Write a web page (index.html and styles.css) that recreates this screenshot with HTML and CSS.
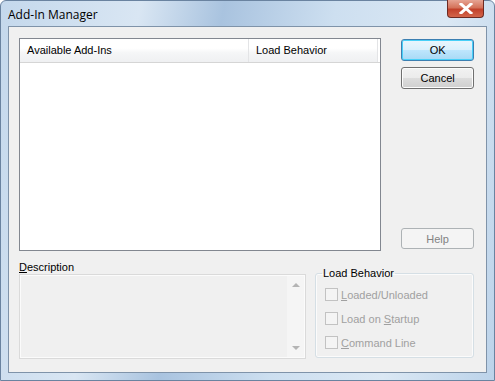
FILE: index.html
```html
<!DOCTYPE html>
<html lang="en">
<head>
    <meta charset="UTF-8">
    <title>Add-In Manager</title>
    <link rel="stylesheet" href="styles.css">
</head>
<body>

<div class="window">
    <div class="titlebar">
        <span class="title">Add-In Manager</span>
        <button class="close" type="button">
            <svg width="14" height="11" viewBox="0 0 14 11">
                <path d="M2 1 L12 10 M12 1 L2 10" stroke="#fff" stroke-width="3" stroke-linecap="square"/>
            </svg>
        </button>
    </div>
    <div class="client">
        <div class="top-row">
            <div class="listbox">
                <div class="list-header">
                    <div class="col col-name">Available Add-Ins</div>
                    <div class="col col-load">Load Behavior</div>
                    <div class="col-rest"></div>
                </div>
            </div>
            <div class="buttons">
                <button class="btn btn-default" type="button">OK</button>
                <button class="btn" type="button">Cancel</button>
                <button class="btn btn-disabled help" type="button">Help</button>
            </div>
        </div>
        <div class="bottom-row">
            <div class="description">
                <div class="desc-label"><u>D</u>escription</div>
                <div class="desc-box">
                    <div class="scrollbar">
                        <span class="arrow up"></span>
                        <span class="arrow down"></span>
                    </div>
                </div>
            </div>
            <fieldset class="group">
                <legend>Load Behavior</legend>
                <label class="check"><span class="box"></span><span><u>L</u>oaded/Unloaded</span></label>
                <label class="check"><span class="box"></span><span>Load on <u>S</u>tartup</span></label>
                <label class="check"><span class="box"></span><span><u>C</u>ommand Line</span></label>
            </fieldset>
        </div>
    </div>
</div>

</body>
</html>
```

FILE: styles.css
```css
* {
    box-sizing: border-box;
}
body {
    margin: 0;
    font-family: 'Liberation Sans', Arial, sans-serif;
    font-size: 11px;
    color: #000;
    background: #fff;
}
.window {
    width: 495px;
    height: 381px;
    padding: 0 7px 7px 7px;
    border: 1px solid #6a83a0;
    border-radius: 6px 6px 0 0;
    background: linear-gradient(100deg, #c4d8ec 0%, #d9e6f3 25%, #a9c3df 40%, #cddff0 60%, #dbe8f4 80%, #bcd3ea 100%);
    display: flex;
    flex-direction: column;
}
.titlebar {
    height: 26px;
    display: flex;
    align-items: flex-start;
    justify-content: space-between;
}
.title {
    font-family: 'Open Sans', 'Liberation Sans', sans-serif;
    font-size: 12px;
    margin-top: 5px;
    color: #000;
}
.close {
    width: 37px;
    height: 18px;
    margin-top: -1px;
    margin-right: 3px;
    padding: 0;
    border: 1px solid #6d2a22;
    border-top: none;
    border-radius: 0 0 4px 4px;
    background: linear-gradient(#e6a493 0%, #d4725a 45%, #c2412b 55%, #d3654a 100%);
    display: flex;
    align-items: center;
    justify-content: center;
}
.client {
    flex: 1;
    background: #f0f0f0;
    border: 1px solid #7f93a9;
    padding: 11px 12px 13px 10px;
    display: flex;
    flex-direction: column;
}
.top-row {
    display: flex;
    gap: 20px;
}
.listbox {
    width: 363px;
    height: 213px;
    border: 1px solid #828790;
    background: #fff;
}
.list-header {
    display: flex;
    height: 24px;
    background: linear-gradient(#ffffff 0%, #ffffff 40%, #f5f6f7 60%, #eff0f2 100%);
    border-bottom: 1px solid #d5d5d5;
}
.col {
    flex-shrink: 0;
    padding: 5px 0 0 7px;
    border-right: 1px solid #e3e4e6;
    white-space: nowrap;
}
.col-name {
    width: 229px;
}
.col-load {
    width: 129px;
}
.col-rest {
    flex: 1;
    background: #fff;
}
.buttons {
    width: 73px;
    display: flex;
    flex-direction: column;
    padding-top: 1px;
}
.btn {
    height: 22px;
    font-family: inherit;
    font-size: 11px;
    border: 1px solid #707070;
    border-radius: 3px;
    background: linear-gradient(#f2f2f2 0%, #ebebeb 50%, #dddddd 51%, #cfcfcf 100%);
    box-shadow: inset 0 0 0 1px #fcfcfc;
    margin-bottom: 6px;
    padding: 0;
}
.btn-default {
    border-color: #3c7fb1;
    background: linear-gradient(#eaf6fd 0%, #d9f0fc 50%, #bee6fd 51%, #a7d9f5 100%);
    box-shadow: inset 0 0 0 1px #48d0f8;
}
.btn-disabled {
    border-color: #adb2b5;
    background: #f4f4f4;
    box-shadow: none;
    color: #838383;
}
.help {
    margin-top: auto;
    margin-bottom: 2px;
    height: 21px;
}
.bottom-row {
    display: flex;
    margin-top: 10px;
    gap: 9px;
}
.desc-label {
    height: 13px;
    line-height: 13px;
}
.desc-box {
    width: 287px;
    height: 85px;
    border: 1px solid #dadada;
    box-shadow: inset 0 0 0 1px #fbfbfb;
    background: #f0f0f0;
    display: flex;
    justify-content: flex-end;
    padding: 1px;
}
.scrollbar {
    width: 17px;
    background: #f5f5f5;
    position: relative;
}
.arrow {
    position: absolute;
    left: 5px;
    width: 0;
    height: 0;
    border-left: 4px solid transparent;
    border-right: 4px solid transparent;
}
.arrow.up {
    top: 7px;
    border-bottom: 4px solid #b4b4b4;
}
.arrow.down {
    bottom: 7px;
    border-top: 4px solid #b4b4b4;
}
.group {
    width: 160px;
    height: 91px;
    margin: 6px 0 0 0;
    padding: 8px 0 0 9px;
    border: 1px solid #d5dfe5;
    border-radius: 3px;
    box-shadow: inset 0 0 0 1px #fbfbfb;
    display: flex;
    flex-direction: column;
    gap: 11px;
}
.group legend {
    padding: 0 1px;
    margin-left: -3px;
    line-height: 13px;
}
.check {
    display: flex;
    align-items: center;
    gap: 3px;
    color: #a0a0a0;
    height: 13px;
}
.box {
    width: 13px;
    height: 13px;
    border: 1px solid #c2c2c2;
    background: #f4f4f4;
}
```
